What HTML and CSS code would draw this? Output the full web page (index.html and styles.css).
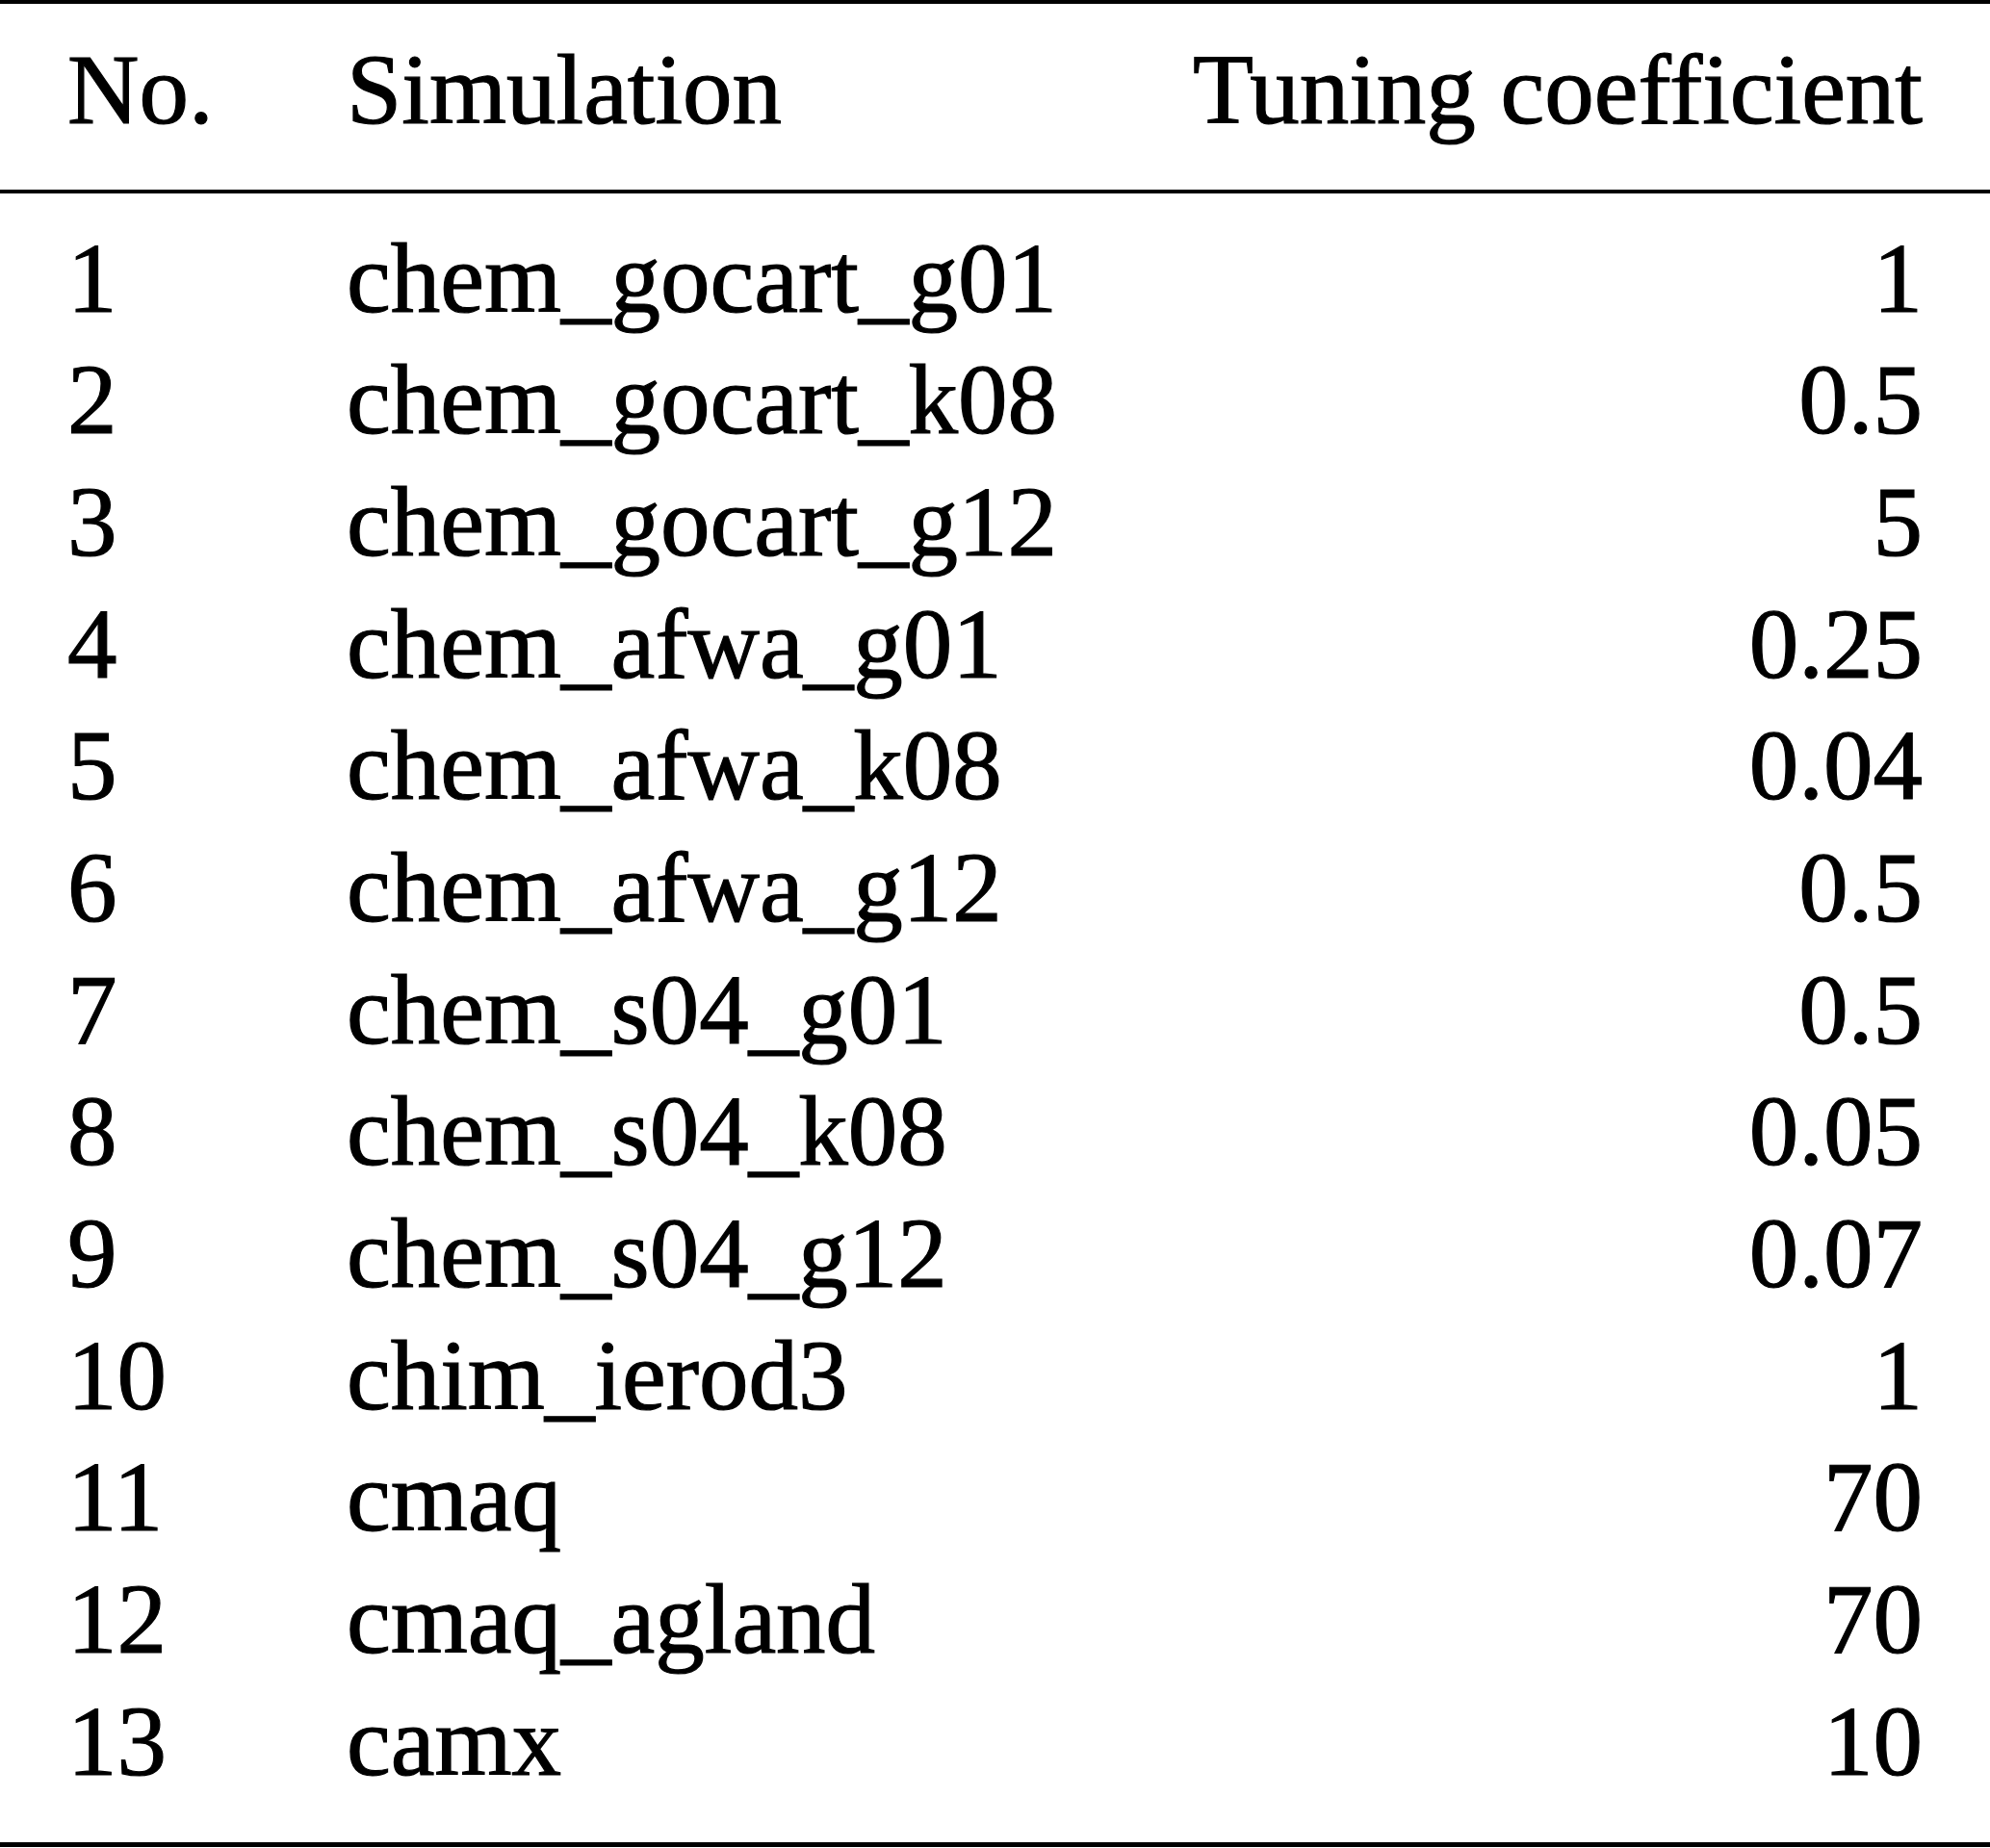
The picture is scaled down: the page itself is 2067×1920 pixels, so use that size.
FILE: index.html
```html
<!DOCTYPE html>
<html lang="en">
<head>
<meta charset="utf-8">
<title>Tuning coefficients</title>
<link rel="stylesheet" href="styles.css">
</head>
<body>
<div class="table">
  <div class="head">
    <div class="row">
      <span class="no">No.</span>
      <span class="sim">Simulation</span>
      <span class="coef">Tuning coefficient</span>
    </div>
  </div>
  <div class="body">
    <div class="row"><span class="no">1</span><span class="sim">chem_gocart_g01</span><span class="coef">1</span></div>
    <div class="row"><span class="no">2</span><span class="sim">chem_gocart_k08</span><span class="coef">0.5</span></div>
    <div class="row"><span class="no">3</span><span class="sim">chem_gocart_g12</span><span class="coef">5</span></div>
    <div class="row"><span class="no">4</span><span class="sim">chem_afwa_g01</span><span class="coef">0.25</span></div>
    <div class="row"><span class="no">5</span><span class="sim">chem_afwa_k08</span><span class="coef">0.04</span></div>
    <div class="row"><span class="no">6</span><span class="sim">chem_afwa_g12</span><span class="coef">0.5</span></div>
    <div class="row"><span class="no">7</span><span class="sim">chem_s04_g01</span><span class="coef">0.5</span></div>
    <div class="row"><span class="no">8</span><span class="sim">chem_s04_k08</span><span class="coef">0.05</span></div>
    <div class="row"><span class="no">9</span><span class="sim">chem_s04_g12</span><span class="coef">0.07</span></div>
    <div class="row"><span class="no">10</span><span class="sim">chim_ierod3</span><span class="coef">1</span></div>
    <div class="row"><span class="no">11</span><span class="sim">cmaq</span><span class="coef">70</span></div>
    <div class="row"><span class="no">12</span><span class="sim">cmaq_agland</span><span class="coef">70</span></div>
    <div class="row"><span class="no">13</span><span class="sim">camx</span><span class="coef">10</span></div>
  </div>
</div>
</body>
</html>
```
FILE: styles.css
```css
html, body {
  margin: 0;
  padding: 0;
  background: #ffffff;
}

body {
  font-family: "Liberation Serif", "Times New Roman", serif;
  font-size: 103px;
  line-height: 126.67px;
  color: #000000;
  -webkit-text-stroke: 1.2px #000000;
}

.table {
  width: 100%;
  border-top: 4px solid #000;
  border-bottom: 5px solid #000;
}

.head {
  padding: 26px 70px 40px;
  border-bottom: 4px solid #000;
}

.body {
  padding: 25px 70px 42px;
}

.row {
  display: grid;
  grid-template-columns: 290px 1fr auto;
  white-space: nowrap;
}

.coef {
  text-align: right;
}
```
